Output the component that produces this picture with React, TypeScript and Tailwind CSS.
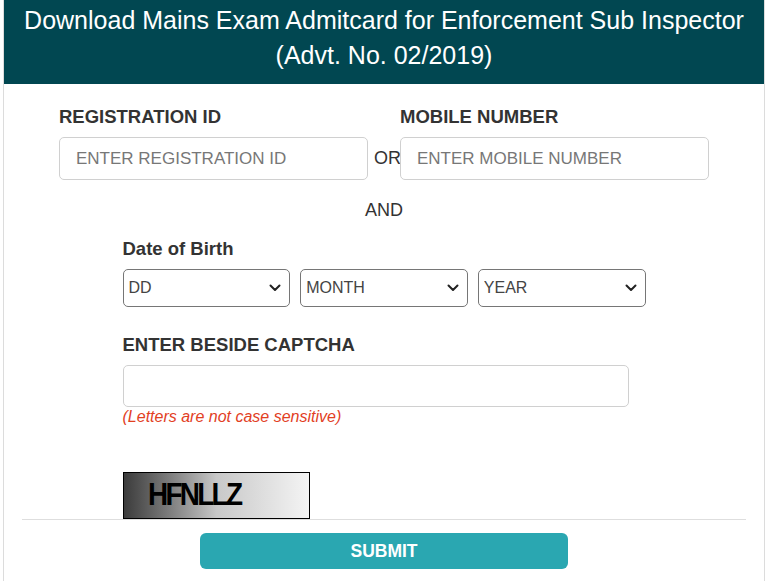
import type { ReactNode } from 'react'

const font = { fontFamily: '"Liberation Sans", Arial, sans-serif' }

function Label({ children }: { children: ReactNode }) {
  return <div className="text-[18.5px] font-bold leading-6 text-[#333]">{children}</div>
}

function Chevron() {
  return (
    <svg
      className="pointer-events-none absolute right-[9px] top-1/2 -translate-y-1/2"
      width="12"
      height="8"
      viewBox="0 0 12 8"
      fill="none"
    >
      <path d="M1.5 1.5 6 6l4.5-4.5" stroke="#222" strokeWidth="2" strokeLinecap="round" strokeLinejoin="round" />
    </svg>
  )
}

function Select({ label }: { label: string }) {
  return (
    <div className="relative w-[168px]">
      <select
        defaultValue=""
        className="h-[38px] w-full appearance-none rounded-[5px] border border-[#767676] bg-white pl-[5px] text-[16px] text-[#444] outline-none"
      >
        <option value="">{label}</option>
      </select>
      <Chevron />
    </div>
  )
}

export default function App() {
  return (
    <div style={font} className="min-h-[581px] bg-white">
      <div className="mx-[3px] min-h-[581px] border-x border-[#dcdcdc]">
        <div className="bg-[#014751] pb-[11px] pt-[3px] text-center text-[25px] leading-[35px] text-white">
          <div>Download Mains Exam Admitcard for Enforcement Sub Inspector</div>
          <div>(Advt. No. 02/2019)</div>
        </div>

        <div className="px-[18px]">
          <div className="mt-[21px] flex justify-center">
            <div className="w-[309px]">
              <Label>REGISTRATION ID</Label>
              <input
                placeholder="ENTER REGISTRATION ID"
                className="mt-2 h-[43px] w-full rounded-[5px] border border-[#d0d0d0] px-4 text-[17px] text-[#333] outline-none placeholder:text-[#777]"
              />
            </div>
            <div className="w-[32px] pl-[6px] pt-[32px] text-[18px] leading-[43px] text-[#333]">OR</div>
            <div className="w-[309px]">
              <Label>MOBILE NUMBER</Label>
              <input
                placeholder="ENTER MOBILE NUMBER"
                className="mt-2 h-[43px] w-full rounded-[5px] border border-[#d0d0d0] px-4 text-[17px] text-[#333] outline-none placeholder:text-[#777]"
              />
            </div>
          </div>

          <div className="mt-[18px] text-center text-[18px] leading-6 text-[#333]">AND</div>

          <div className="mx-auto mt-[15px] w-[523px]">
            <Label>Date of Birth</Label>
            <div className="mt-2 flex gap-[10px]">
              <Select label="DD" />
              <Select label="MONTH" />
              <Select label="YEAR" />
            </div>

            <div className="mt-[26px]">
              <Label>ENTER BESIDE CAPTCHA</Label>
            </div>
            <input className="mt-2 h-[42px] w-[506px] rounded-[5px] border border-[#d0d0d0] px-3 text-[16px] outline-none" />
            <div className="text-[16px] italic leading-5 text-[#e2401f]">(Letters are not case sensitive)</div>

            <div className="mt-[45px] flex h-[47px] w-[187px] items-center border border-black bg-gradient-to-r from-[#3c3c3c] via-[#c8c8c8] to-[#f4f4f4] pl-[24px]">
              <span className="origin-left scale-x-[0.9] text-[31px] font-bold tracking-[-3px] text-black">HFNLLZ</span>
            </div>
          </div>

          <div className="border-t border-[#dedede]" />

          <div className="mt-[13px] flex justify-center pb-4">
            <button className="h-[36px] w-[368px] rounded-[6px] bg-[#2aa7b1] text-[17.5px] font-bold text-white">
              SUBMIT
            </button>
          </div>
        </div>
      </div>
    </div>
  )
}
